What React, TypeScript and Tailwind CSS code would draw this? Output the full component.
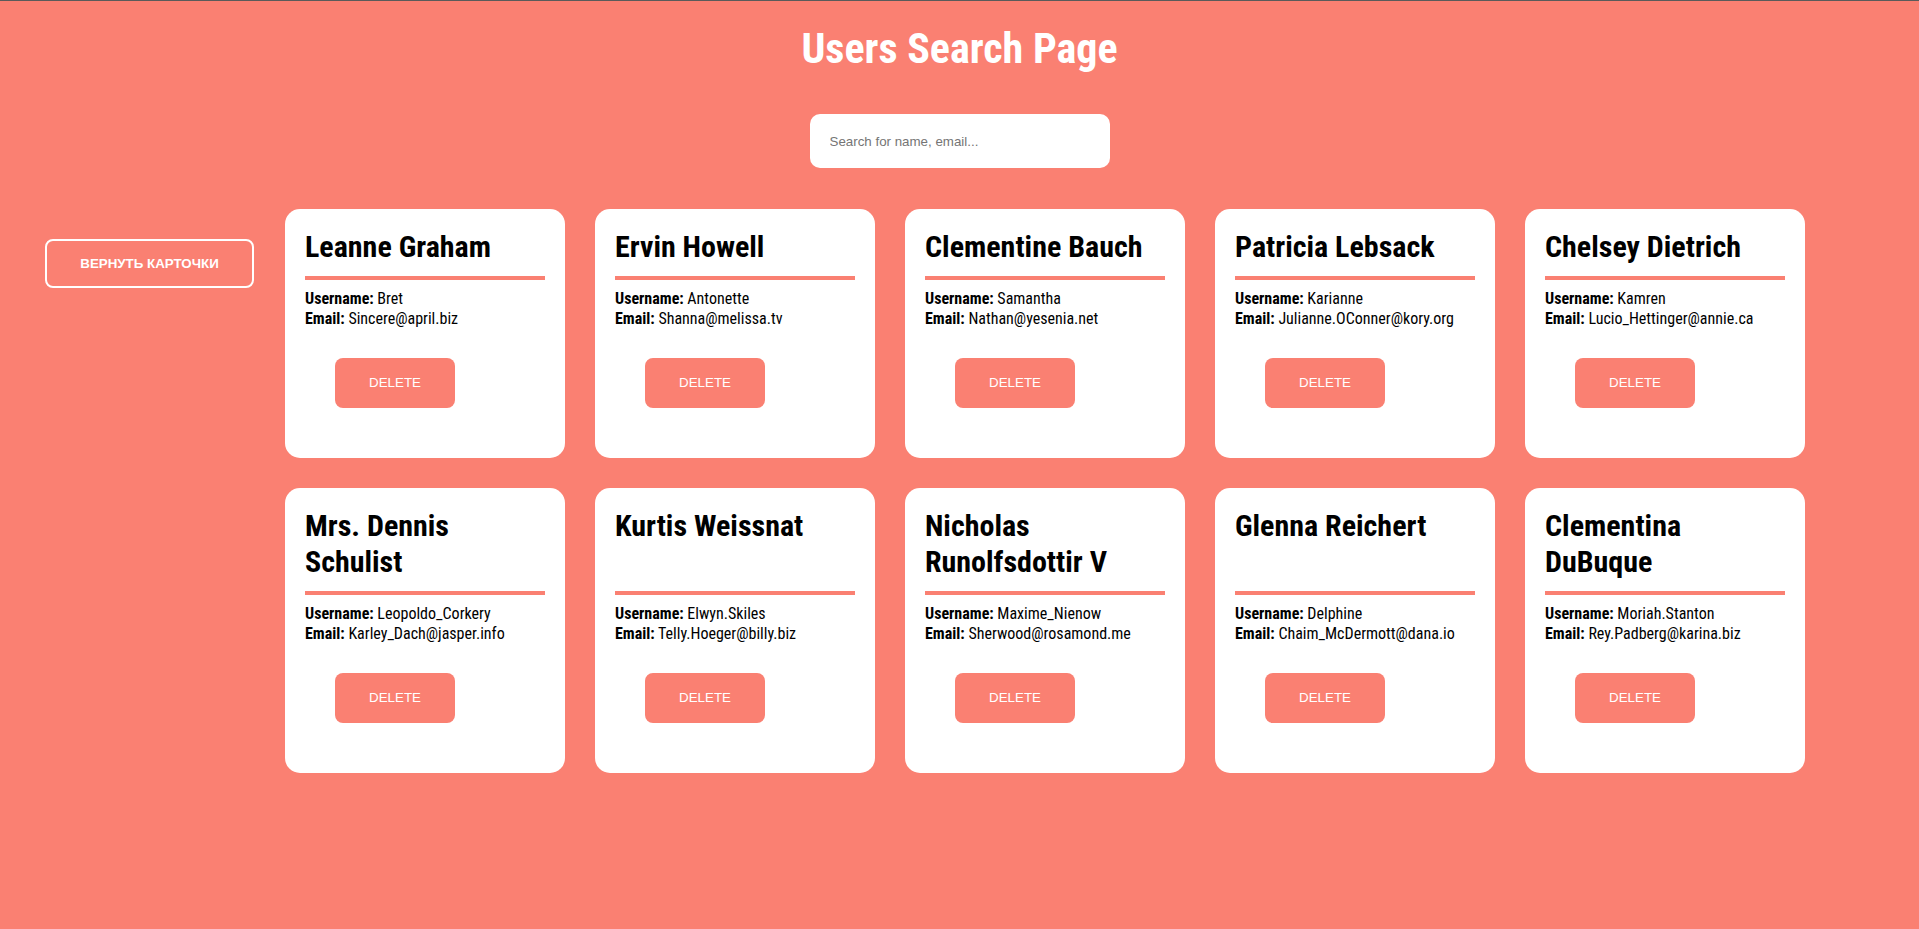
import { useState } from 'react';

type User = {
    id: number;
    name: string;
    username: string;
    email: string;
};

const initialUsers: User[] = [
    { id: 1, name: 'Leanne Graham', username: 'Bret', email: 'Sincere@april.biz' },
    { id: 2, name: 'Ervin Howell', username: 'Antonette', email: 'Shanna@melissa.tv' },
    { id: 3, name: 'Clementine Bauch', username: 'Samantha', email: 'Nathan@yesenia.net' },
    { id: 4, name: 'Patricia Lebsack', username: 'Karianne', email: 'Julianne.OConner@kory.org' },
    { id: 5, name: 'Chelsey Dietrich', username: 'Kamren', email: 'Lucio_Hettinger@annie.ca' },
    { id: 6, name: 'Mrs. Dennis Schulist', username: 'Leopoldo_Corkery', email: 'Karley_Dach@jasper.info' },
    { id: 7, name: 'Kurtis Weissnat', username: 'Elwyn.Skiles', email: 'Telly.Hoeger@billy.biz' },
    { id: 8, name: 'Nicholas Runolfsdottir V', username: 'Maxime_Nienow', email: 'Sherwood@rosamond.me' },
    { id: 9, name: 'Glenna Reichert', username: 'Delphine', email: 'Chaim_McDermott@dana.io' },
    { id: 10, name: 'Clementina DuBuque', username: 'Moriah.Stanton', email: 'Rey.Padberg@karina.biz' },
];

export default function App() {
    const [users, setUsers] = useState<User[]>(initialUsers);
    const [search, setSearch] = useState('');

    const filtered = users.filter((u) => {
        const q = search.toLowerCase();
        return u.name.toLowerCase().includes(q) || u.email.toLowerCase().includes(q);
    });

    return (
        <div className="min-h-[929px] bg-[#fa8072] border-t border-[#5a5a5a] font-['Roboto',sans-serif] [font-stretch:75%]">
            {/* Header */}
            <h1 className="pt-[24px] text-center text-[42px] leading-[48px] font-bold text-white">Users Search Page</h1>

            {/* Search */}
            <div className="flex justify-center mt-[41px]">
                <input
                    type="text"
                    placeholder="Search for name, email..."
                    value={search}
                    onChange={(e) => setSearch(e.target.value)}
                    className="w-[300px] h-[54px] px-[20px] rounded-[10px] bg-white text-[13.33px] font-['Liberation_Sans',Arial,sans-serif] [font-stretch:100%] placeholder:text-[#757575] focus:outline-none"
                />
            </div>

            {/* Content */}
            <div className="flex items-start gap-[31px] pl-[45px] mt-[41px] pb-10">
                <button
                    onClick={() => setUsers(initialUsers)}
                    className="mt-[30px] w-[209px] h-[49px] border-2 border-white rounded-lg text-white font-bold uppercase text-[13.33px] font-['Liberation_Sans',Arial,sans-serif] [font-stretch:100%]"
                >
                    Вернуть карточки
                </button>

                <div className="grid grid-cols-[repeat(5,280px)] gap-[30px]">
                    {filtered.map((user) => (
                        <div key={user.id} className="flex flex-col bg-white rounded-[15px] p-[20px] text-black">
                            <h2 className="flex-1 text-[30px] leading-[36px] font-bold">{user.name}</h2>
                            <div className="h-[4px] bg-[#fa8072] mt-[11px]" />
                            <div className="mt-[9px] text-[16px] leading-[20px]">
                                <div><span className="font-bold">Username:</span> {user.username}</div>
                                <div><span className="font-bold">Email:</span> {user.email}</div>
                            </div>
                            <button
                                onClick={() => setUsers(users.filter((u) => u.id !== user.id))}
                                className="mt-[29px] mb-[30px] ml-[30px] w-[120px] h-[50px] rounded-lg bg-[#fa8072] text-white text-[13.33px] font-['Liberation_Sans',Arial,sans-serif] [font-stretch:100%]"
                            >
                                DELETE
                            </button>
                        </div>
                    ))}
                </div>
            </div>
        </div>
    );
}
